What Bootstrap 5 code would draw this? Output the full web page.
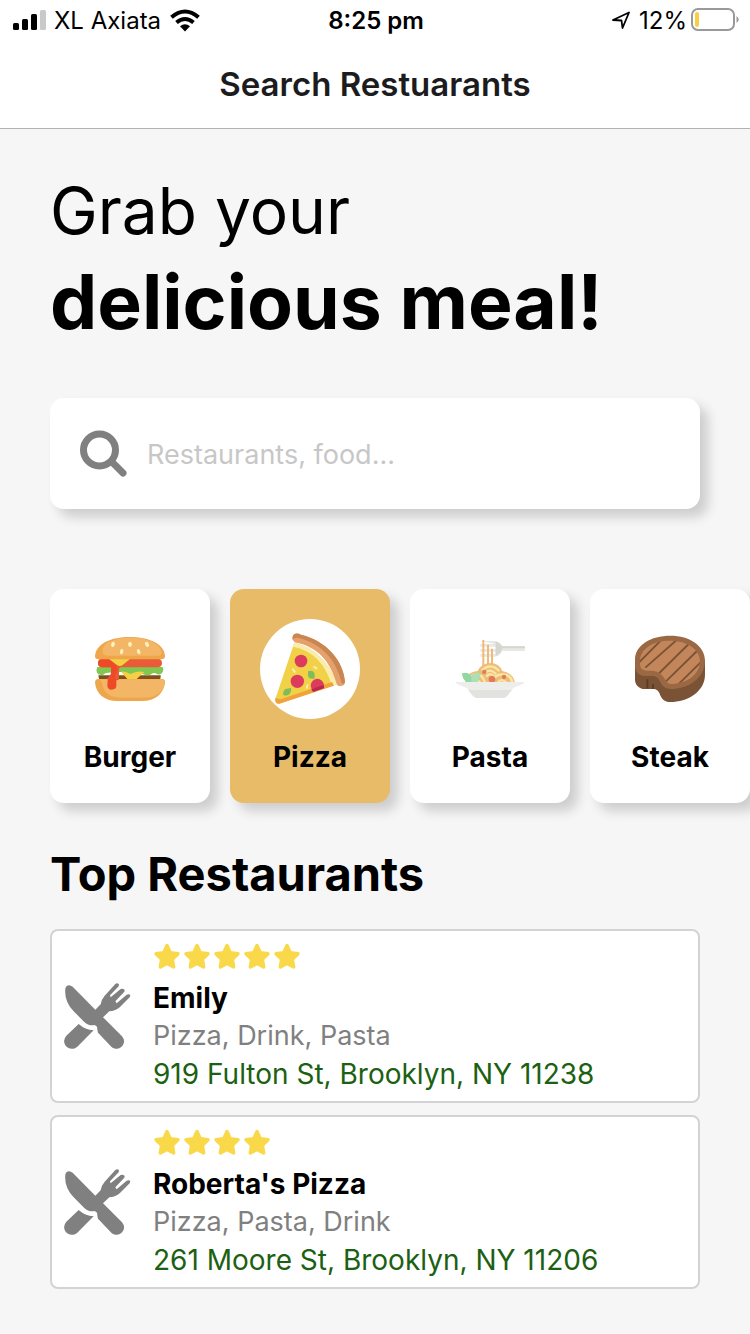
<!DOCTYPE html>
<html lang="en">
<head>
<meta charset="utf-8">
<meta name="viewport" content="width=device-width, initial-scale=1">
<title>Search Restuarants</title>
<link href="https://cdn.jsdelivr.net/npm/bootstrap@5.3.0/dist/css/bootstrap.min.css" rel="stylesheet">
<style>
  body { font-family: Inter, "Liberation Sans", sans-serif; background: #f6f6f6; color: #000; }
  .status-bar { height: 40px; padding: 0 11px 0 13px; font-size: 24px; line-height: 40px; }
  .status-side { flex: 1 1 0; }
  .status-bar span, .status-time { padding-top: 2px; line-height: 38px; }
  .status-time { font-weight: 600; }
  .title-bar { height: 89px; border-bottom: 1px solid #b2b2b4; }
  .title-bar h1 { font-size: 33px; line-height: 88px; font-weight: 600; color: #1c1c1e; }
  .page-main { padding: 39px 0 45px 50px; }
  .inset-end { margin-right: 50px; }
  .hero-light { font-size: 64px; line-height: 86px; font-weight: 400; }
  .hero-bold { font-size: 75px; line-height: 96px; font-weight: 700; }
  .soft-shadow { box-shadow: 8px 8px 12px rgba(0, 0, 0, .17); }
  .search-box { margin-top: 48px; height: 111px; padding: 0 28px; gap: 19px; border-radius: 14px; }
  .search-box .form-control { font-size: 27px; color: #000; }
  .search-box .form-control::placeholder { color: #c7c7c7; opacity: 1; }
  .category-row { margin-top: 60px; padding: 20px 0 36px 50px; margin-left: -50px; gap: 20px; overflow-x: auto; scrollbar-width: none; }
  .category-row::-webkit-scrollbar { display: none; }
  .category { flex: 0 0 160px; padding: 30px 0 28px; border: 0; border-radius: 14px; background: #fff; color: #000; font-size: 28px; line-height: 36px; font-weight: 700; }
  .category.active { background: #e7bb67; }
  .category svg { display: block; margin: 0 auto 20px; width: 100px; height: 100px; border-radius: 50%; background: #fff; }
  .section-title { font-size: 47px; line-height: 70px; font-weight: 700; margin-bottom: 20px; }
  .restaurants { gap: 12px; }
  .restaurant { padding: 10px 12px 8px 11px; gap: 22px; border: 2px solid #d3d3d3; border-radius: 8px; font-size: 28px; line-height: 38px; }
  .stars { height: 32px; margin-bottom: 6px; }
  .cuisine { color: #808080; font-size: 27px; }
  .address { color: #1c6012; }
</style>
</head>
<body>
<svg class="d-none" aria-hidden="true">
  <symbol id="star" viewBox="0 0 30 32"><path d="M14 4.500L17.300 11.600L25 12.700L19.400 18.200L20.700 26L14 22.500L7.300 26L8.600 18.200L3 12.700L10.700 11.600Z" fill="#f9d849" stroke="#f9d849" stroke-width="3.400" stroke-linejoin="round"/></symbol>
  <symbol id="cutlery" viewBox="54 188 204 204">
    <g fill="#808080">
      <path d="M65 197Q73 191 83 199L151 268L167 252Q168 239 179 226L211 191Q217 186 222 192L221 198L195 225L197 231L227 206Q234 203 239 209L238 214L211 243L215 249L245 223Q252 219 256 225L254 231L225 260Q212 272 193 273L174 291L231 348Q241 360 235 372C229 386 211 390 199 379L159 337Q157 330 156 319Q149 312 145 315Q129 316 118 305L86 273Q57 242 61 205Q62 200 65 197Z"/>
      <path d="M101 311L64 346Q53 359 60 373C68 388 88 388 97 379L146 330Q120 328 101 311Z"/>
    </g>
  </symbol>
</svg>

<header class="bg-white">
  <div class="status-bar d-flex align-items-center">
    <div class="status-side d-flex align-items-center">
      <svg width="33" height="22" viewBox="0 0 33 22" aria-hidden="true"><rect y="14" width="6" height="7" rx="1.500"/><rect x="9" y="10" width="6" height="11" rx="1.500"/><rect x="18" y="5" width="6" height="16" rx="1.500"/><rect x="27" y="1" width="6" height="20" rx="1.500" fill="#c9c9c9"/></svg>
      <span class="ms-2 me-2">XL Axiata</span>
      <svg width="32" height="24" viewBox="0 0 32 24" aria-hidden="true"><g fill="none" stroke="#000" stroke-width="4"><path d="M2.500 9.300Q16-2.300 29.500 9.300"/><path d="M7.500 14.500Q16 7.500 24.500 14.500"/></g><path d="M11 18.200Q16 14.300 21 18.200L16 23.500Z"/></svg>
    </div>
    <div class="status-time">8:25 pm</div>
    <div class="status-side d-flex align-items-center justify-content-end">
      <svg class="me-2" width="20" height="20" viewBox="0 0 20 20" aria-hidden="true"><path d="M2 10L18 2.500L11.500 18L10.500 10.500Z" fill="none" stroke="#000" stroke-width="1.800" stroke-linejoin="round"/></svg>
      <span class="me-1">12%</span>
      <svg width="48" height="24" viewBox="0 0 48 24" aria-hidden="true"><rect x="1" y="1" width="42" height="21" rx="6" fill="#fff" stroke="#999" stroke-width="2"/><rect x="4" y="4" width="4" height="15" rx="2" fill="#f8ce46"/><path d="M45.500 8Q50 11.500 45.500 15Z" fill="#999"/></svg>
    </div>
  </div>
  <div class="title-bar text-center"><h1 class="m-0">Search Restuarants</h1></div>
</header>

<main class="page-main">
  <h2 class="m-0 inset-end"><span class="d-block hero-light">Grab your</span><span class="d-block hero-bold">delicious meal!</span></h2>

  <form class="search-box inset-end soft-shadow bg-white d-flex align-items-center" role="search">
    <label for="search" aria-label="Search"><svg class="d-block" width="50" height="50" viewBox="0 0 50 50" aria-hidden="true"><g fill="none" stroke="#808080" stroke-linecap="round"><circle cx="21.500" cy="21" r="16" stroke-width="7"/><path d="M34 33L45 44" stroke-width="7"/></g></svg></label>
    <input id="search" type="search" class="form-control border-0 shadow-none bg-transparent px-0 pb-0 pt-1" placeholder="Restaurants, food...">
  </form>

  <div class="category-row d-flex">
    <button type="button" class="category soft-shadow">
      <svg viewBox="0 -3 300 300" aria-hidden="true">
        <path d="M55 166H242V171Q242 181 231 181H67Q56 181 56 171Z" fill="#83501b"/>
        <path d="M52 141H248Q253 153 245 160Q237 167 227 160Q219 156 211 164Q204 168 194 164L180 158L160 165Q150 170 140 162L125 156L85 158Q76 157 70 164Q58 168 51 158Q47 150 52 141Z" fill="#81c850"/>
        <path d="M123 155Q136 152 151 162Q171 151 193 156L160 186Q154 190 148 184Z" fill="#f4d044"/>
        <path d="M69 116H232Q246 116 246 129Q246 142 232 142H123Q117 142 117 151V172Q117 181 109 181V199Q108 209 95 209Q83 209 82 198V175Q89 172 93 160V142H68Q54 142 54 129Q54 116 69 116Z" fill="#ea5b38"/>
        <path d="M69 116H89L107 136Q117 145 110 155Q106 162 106 181V201Q103 209 95 209Q82 209 82 197V176Q93 175 93 158V142H68Q54 142 54 129Q54 116 69 116Z" fill="#ef4a28"/>
        <path d="M86 116H151L127 136Q119 141 111 135Z" fill="#f4d044"/>
        <path d="M45 108C48 70 94 51 149 51C206 51 252 70 255 108Q255 118 244 118H55Q45 118 45 108Z" fill="#efa64b"/>
        <path d="M68 88C73 65 107 53 149 53C203 53 234 68 244 91Q250 106 237 107H79Q65 105 68 88Z" fill="#f2b666"/>
        <path d="M54 177H246Q256 177 255 188C251 220 227 243 185 243H112C72 243 48 220 45 188Q45 178 54 177Z" fill="#efa64b"/>
        <path d="M55 178H246Q256 180 254 192Q245 232 193 233H120Q72 230 67 192Q65 181 55 178Z" fill="#f2b666"/>
        <path d="M83 177H117Q116 181 109 181V199Q108 209 95 209Q83 209 82 198Z" fill="#ef4a28"/>
        <g fill="#fff1bd"><ellipse cx="99" cy="73" rx="5.500" ry="8" transform="rotate(15 99 73)"/><ellipse cx="150" cy="73" rx="5.500" ry="8"/><ellipse cx="201" cy="73" rx="5.500" ry="8" transform="rotate(-30 201 73)"/><ellipse cx="125" cy="95" rx="5" ry="8" transform="rotate(10 125 95)"/><ellipse cx="176" cy="95" rx="5" ry="8" transform="rotate(-20 176 95)"/></g>
      </svg>Burger
    </button>
    <button type="button" class="category soft-shadow active">
      <svg viewBox="30 27 300 300" aria-hidden="true">
        <path d="M133 98Q220 118 263 222L88 281Q74 283 76 267Z" fill="#f0d148"/>
        <path d="M133 98Q220 118 263 222L246 229Q217 126 129 110Z" fill="#faecad"/>
        <path d="M246 216L252 227L88 281Q73 282 76 264L91 268Z" fill="#f0a33a"/>
        <path d="M130 75Q139 67 153 74C230 93 280 151 285 216Q284 228 272 228Q261 229 259 218C240 154 203 110 134 97Q123 87 130 75Z" fill="#e5a06b"/>
        <path d="M130 75Q139 67 153 74C230 93 280 151 285 216Q282 224 275 220C260 151 218 103 146 84Q132 81 128 89Q126 81 130 75Z" fill="#c98650"/>
        <circle cx="153" cy="153" r="19" fill="#dc3b5c"/><circle cx="142" cy="214" r="20" fill="#dc3b5c"/>
        <path d="M185 237A20 20 0 1 1 222 228Z" fill="#dc3b5c"/><path d="M184 237L222 225V235L190 246Q186 243 184 237Z" fill="#b92751"/>
        <path d="M174 184Q191 178 194 193V206Q175 209 174 195Z M123 234Q124 248 118 253Q110 259 100 255Q98 244 106 237Z" fill="#7ebd59"/>
        <g stroke="#faecad" stroke-width="6" stroke-linecap="square"><path d="M129 178L134 185M193 171L199 175M172 226L171 233"/></g>
      </svg>Pizza
    </button>
    <button type="button" class="category soft-shadow">
      <svg viewBox="0 -3 300 300" aria-hidden="true">
        <path d="M122 63H164Q178 64 187 79H255V93H187Q179 109 165 110H121V102H167V95H121V87H167V80H121V72H166Z" fill="#e8e8e5"/>
        <path d="M167 64Q180 68 187 79H255V85H187Q181 103 167 108Z" fill="#d5d5d2"/>
        <path d="M75 188Q77 157 113 153Q125 129 151 129Q177 129 187 153Q218 158 225 188Z" fill="#efbd7b"/>
        <g fill="none" stroke="#fae7a1" stroke-width="7"><path d="M84 188Q89 165 111 162Q127 164 135 188M98 188Q105 172 121 188M126 151Q151 126 178 153M135 160Q150 142 169 163M159 188Q161 163 188 163Q212 163 217 188M174 188Q184 173 199 188M139 170Q151 153 165 173"/></g>
        <g fill="none" stroke="#f2b875" stroke-width="6"><path d="M130 60V139M144 74V134M156 86V134"/></g>
        <circle cx="133" cy="156" r="6.500" fill="#df7b5c"/><circle cx="156" cy="178" r="10" fill="#df7b5c"/><circle cx="192" cy="171" r="6.500" fill="#df7b5c"/>
        <path d="M66 160Q86 154 94 169Q104 156 121 160Q121 176 110 187H82Q66 178 66 160Z" fill="#91d7a3"/><path d="M94 169Q104 156 121 160Q121 176 110 187H94Z" fill="#abe0b4"/>
        <path d="M46 186H253Q251 191 246 193L220 204L202 227Q197 234 187 234H112Q103 234 97 226L81 205L53 193Q47 190 46 186Z" fill="#ededeb"/>
        <path d="M85 210H216L202 227Q197 234 187 234H112Q103 234 97 226Z" fill="#e2e2df"/>
      </svg>Pasta
    </button>
    <button type="button" class="category soft-shadow">
      <svg viewBox="0 -3 300 300" aria-hidden="true">
        <path d="M45 120H255V164C255 215 202 246 151 246C133 246 125 237 119 221Q113 206 99 207H77C56 208 45 193 45 179Z" fill="#7a5235"/>
        <path d="M45 119C45 75 93 47 151 47C210 47 255 78 255 122C255 177 201 207 152 207C132 207 126 195 119 183Q111 168 99 168H77C56 168 45 154 45 138Z" fill="#9a6944"/>
        <path d="M60 123C61 84 102 62 150 62C202 62 241 88 240 126C239 165 196 192 154 192C139 191 138 181 130 171Q119 154 99 152H79Q60 151 60 133Z" fill="#c3865b"/>
        <clipPath id="meat-edge"><path d="M60 123C61 84 102 62 150 62C202 62 241 88 240 126C239 165 196 192 154 192C139 191 138 181 130 171Q119 154 99 152H79Q60 151 60 133Z"/></clipPath>
        <g stroke="#7a5235" stroke-width="5.500" clip-path="url(#meat-edge)"><path d="M57 127L122 62M76 143L169 61M115 162L206 72M134 188L231 93M175 193L244 125"/></g>
        <path d="M82 178V205M99 193V207" stroke="#5e3b23" stroke-width="5.500"/>
      </svg>Steak
    </button>
  </div>

  <h2 class="section-title inset-end">Top Restaurants</h2>
  <div class="restaurants inset-end d-flex flex-column">
    <article class="restaurant bg-white d-flex align-items-center">
      <svg class="flex-shrink-0" width="68" height="68" aria-hidden="true"><use href="#cutlery"/></svg>
      <div>
        <div class="stars d-flex" role="img" aria-label="5 stars"><svg width="30" height="32"><use href="#star"/></svg><svg width="30" height="32"><use href="#star"/></svg><svg width="30" height="32"><use href="#star"/></svg><svg width="30" height="32"><use href="#star"/></svg><svg width="30" height="32"><use href="#star"/></svg></div>
        <div class="fw-bold">Emily</div>
        <div class="cuisine">Pizza, Drink, Pasta</div>
        <div class="address">919 Fulton St, Brooklyn, NY 11238</div>
      </div>
    </article>
    <article class="restaurant bg-white d-flex align-items-center">
      <svg class="flex-shrink-0" width="68" height="68" aria-hidden="true"><use href="#cutlery"/></svg>
      <div>
        <div class="stars d-flex" role="img" aria-label="4 stars"><svg width="30" height="32"><use href="#star"/></svg><svg width="30" height="32"><use href="#star"/></svg><svg width="30" height="32"><use href="#star"/></svg><svg width="30" height="32"><use href="#star"/></svg></div>
        <div class="fw-bold">Roberta's Pizza</div>
        <div class="cuisine">Pizza, Pasta, Drink</div>
        <div class="address">261 Moore St, Brooklyn, NY 11206</div>
      </div>
    </article>
  </div>
</main>
<script src="https://cdn.jsdelivr.net/npm/bootstrap@5.3.0/dist/js/bootstrap.bundle.min.js"></script>
</body>
</html>
